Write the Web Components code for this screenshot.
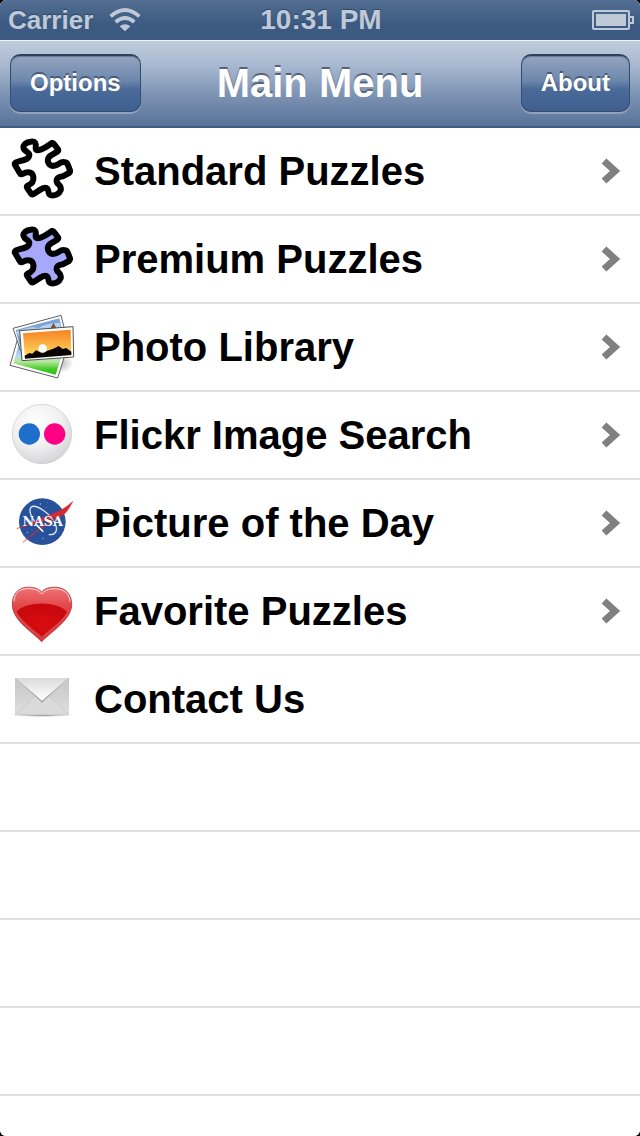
<!DOCTYPE html>
<html lang="en">
<head>
<meta charset="utf-8">
<meta name="viewport" content="width=device-width, initial-scale=1">
<title>Main Menu</title>
<style>
  html {
    background: #000;
  }
  body {
    margin: 0;
    font-family: "Liberation Sans", Arial, sans-serif;
    font-weight: bold;
  }
</style>
</head>
<body>
<puzzle-app>
  <status-bar slot="top" carrier="Carrier" time="10:31 PM"></status-bar>
  <nav-bar slot="top">
    <bar-button slot="left">Options</bar-button>
    Main Menu
    <bar-button slot="right">About</bar-button>
  </nav-bar>
  <menu-row icon="puzzle" href="#standard" arrow>Standard Puzzles</menu-row>
  <menu-row icon="premium" href="#premium" arrow>Premium Puzzles</menu-row>
  <menu-row icon="photos" href="#photos" arrow>Photo Library</menu-row>
  <menu-row icon="flickr" href="#flickr" arrow>Flickr Image Search</menu-row>
  <menu-row icon="nasa" href="#picture" arrow>Picture of the Day</menu-row>
  <menu-row icon="heart" href="#favorites" arrow>Favorite Puzzles</menu-row>
  <menu-row icon="mail" href="#contact">Contact Us</menu-row>
</puzzle-app>

<script>
const piece = (fill) => `
  <path fill="${fill}" stroke="#000" stroke-width="18" stroke-linejoin="round"
    d="M74 66 C64 54 76 43 92 41 C106 39 109 46 107 58 C106 68 112 68 124 64 C138 59 146 52 156 45
       Q160 44 162 48 L174 64 Q176 68 172 71 L153 82 C141 89 141 102 149 110 C158 117 168 113 177 107
       Q187 100 195 103 Q201 104 203 109 L210 127 Q211 132 207 135 L188 145 C174 147 169 151 170 161
       C172 171 186 171 182 187 C178 198 166 203 154 202 C143 201 147 188 142 182 C137 176 129 180 121 185
       L101 198 Q96 201 93 197 L81 179 Q79 175 83 173 C96 168 102 161 100 147 C98 134 88 130 76 134
       L67 138 Q62 140 60 136 L45 111 Q43 107 47 104 L60 99 C76 96 87 93 88 81 C88 73 80 73 74 66 Z"/>`;

// todos los iconos comparten el mismo viewBox de 270 x 258
const icons = {
  puzzle: piece("#fff"),
  premium: piece("#a5a8fb"),
  photos: `
    <defs>
      <linearGradient id="grass" x2="0" y2="1"><stop offset="0" stop-color="#5f90cf"/><stop offset=".45" stop-color="#b9d9f4"/><stop offset=".62" stop-color="#b5e89a"/><stop offset=".85" stop-color="#3fcb22"/><stop offset="1" stop-color="#2fb916"/></linearGradient>
      <linearGradient id="dusk" x2="0" y2="1"><stop offset="0" stop-color="#f58220"/><stop offset=".55" stop-color="#fbb648"/><stop offset="1" stop-color="#ffe65a"/></linearGradient>
      <radialGradient id="shade"><stop offset="0" stop-color="#000" stop-opacity=".3"/><stop offset="1" stop-color="#000" stop-opacity="0"/></radialGradient>
    </defs>
    <ellipse cx="178" cy="178" rx="42" ry="30" fill="url(#shade)"/>
    <path d="M54 101 L30 184 L173 222 L202 130 Z" fill="#fff" stroke="#606060" stroke-width="3"/>
    <path d="M60 108 L40 178 L167 212 L190 140 Z" fill="url(#grass)"/>
    <path d="M39 73 L183 34 L205 120 L62 140 Z" fill="#fff" stroke="#606060" stroke-width="3"/>
    <path d="M47 78 L178 43 L190 90 L60 128 Z" fill="#78a4d8"/>
    <path d="M47 84 Q90 65 115 72 Q145 55 180 57 L185 78 L60 100 Z" fill="#b8d0ee"/>
    <path d="M151 76 L155 67 L160 56 L166 67 L170 76 Z" fill="#80502e"/>
    <path d="M59 80 L219 68 L221 159 L66 170 Z" fill="#fff" stroke="#505050" stroke-width="3"/>
    <path d="M69 88 L212 77 L214 153 L75 163 Z" fill="url(#dusk)"/>
    <circle cx="128" cy="134" r="13" fill="#fff"/>
    <path d="M74 155 L88 147 L97 149 L108 139 L118 143 Q130 151 140 141 L151 137 L163 133 L176 126 L188 135 L199 132 L214 143 L214 153 L75 164 Z" fill="#090402"/>`,
  flickr: `
    <defs><radialGradient id="ball" cx=".4" cy=".3" r=".75"><stop offset="0" stop-color="#fff"/><stop offset=".55" stop-color="#f0f0f1"/><stop offset="1" stop-color="#d2d2d4"/></radialGradient></defs>
    <circle cx="126" cy="126" r="89" fill="url(#ball)" stroke="#c9c9ca" stroke-width="2"/>
    <circle cx="88" cy="126" r="32" fill="#1d6fcb"/>
    <circle cx="164" cy="126" r="32" fill="#ff0084"/>`,
  nasa: `
    <circle cx="127" cy="125" r="70" fill="#27519b"/>
    <g fill="#b4c8e8">
      <circle cx="121" cy="72" r="2"/><circle cx="139" cy="82" r="1"/><circle cx="107" cy="90" r="1"/><circle cx="151" cy="76" r="1"/>
      <circle cx="82" cy="157" r="2"/><circle cx="99" cy="164" r="1"/><circle cx="129" cy="175" r="2"/><circle cx="148" cy="180" r="1"/>
      <circle cx="174" cy="158" r="1"/><circle cx="112" cy="183" r="1"/><circle cx="89" cy="98" r="1"/><circle cx="143" cy="68" r="1"/>
    </g>
    <path d="M128 153 C104 133 82 94 93 82 C106 69 153 102 166 132 C174 151 168 165 146 164" fill="none" stroke="#dfe8f5" stroke-width="4"/>
    <path d="M50 146 Q118 119 166 98 Q191 89 219 64 Q205 92 193 102 Q124 141 68 188 Q113 143 178 108 Q112 129 50 146 Z" fill="#d72b31" stroke="#d72b31"/>
    <text x="128" y="138" text-anchor="middle" font-family="DejaVu Serif, serif" font-size="38" font-weight="bold" fill="#fff">NASA</text>
    <path d="M110 136 L130 155" stroke="#fff" stroke-width="4"/>`,
  heart: `
    <defs>
      <linearGradient id="red" x2="0" y2="1"><stop offset="0" stop-color="#ef7376"/><stop offset=".45" stop-color="#de3c3e"/><stop offset="1" stop-color="#d53539"/></linearGradient>
      <radialGradient id="deep" cx=".5" cy=".6"><stop offset="0" stop-color="#d90b10"/><stop offset="1" stop-color="#c9090e"/></radialGradient>
    </defs>
    <path d="M125 72 C137 58 154 57 172 58 C199 61 217 82 215 112 C213 155 158 188 125 221 C92 188 39 157 37 112 C35 82 53 60 79 58 C98 56 114 60 125 72 Z" fill="url(#red)" stroke="#a71d24" stroke-width="2"/>
    <path d="M50 132 C75 98 173 98 201 132 C183 163 148 184 125 205 C102 185 69 163 50 132 Z" fill="url(#deep)"/>
    <path d="M42 100 C43 73 61 63 80 62 C100 61 115 65 125 78 C136 64 153 61 173 63 C194 65 209 79 210 101" fill="none" stroke="#fff" stroke-opacity=".75" stroke-width="3"/>
    <path d="M44 126 C57 162 101 187 125 213 C151 186 196 160 208 125" fill="none" stroke="#f28c8e" stroke-opacity=".3" stroke-width="3"/>`,
  mail: `
    <defs>
      <linearGradient id="paper" x2="0" y2="1"><stop offset="0" stop-color="#c6c6c6"/><stop offset="1" stop-color="#dedede"/></linearGradient>
      <linearGradient id="flap" x2="0" y2="1"><stop offset="0" stop-color="#dcdcdc"/><stop offset="1" stop-color="#fff"/></linearGradient>
      <linearGradient id="fold" x2="0" y2="1"><stop offset="0" stop-color="#aaa"/><stop offset="1" stop-color="#777"/></linearGradient>
      <radialGradient id="floor"><stop offset="0" stop-color="#000" stop-opacity=".55"/><stop offset="1" stop-color="#000" stop-opacity="0"/></radialGradient>
    </defs>
    <ellipse cx="126" cy="176" rx="92" ry="7" fill="url(#floor)"/>
    <path d="M45 66 H207 V176 H45 Z" fill="url(#paper)"/>
    <path d="M45 176 L106 120 H146 L207 176 Z" fill="#dadada" stroke="#c6c6c6" stroke-width="2"/>
    <path d="M46 67 L126 140 L206 67 Z" fill="url(#fold)" opacity=".55"/>
    <path d="M47 66 L126 134 L205 66 Z" fill="url(#flap)"/>`
};

class PuzzleApp extends HTMLElement {
  constructor() {
    super();
    this.attachShadow({ mode: "open" }).innerHTML = `
      <style>
        :host {
          display: flex;
          flex-direction: column;
          min-height: 100vh;
          border-radius: 6px;
          overflow: hidden;
          background: #fff;
        }
        main {
          display: flex;
          flex-direction: column;
          flex: 1;
        }
        /* filas vacías hasta el final de la pantalla */
        .empty {
          flex: 1;
          background: repeating-linear-gradient(#fff 0 86px, #e0e0e0 86px 88px);
        }
      </style>
      <slot name="top"></slot>
      <main>
        <slot></slot>
        <div class="empty"></div>
      </main>`;
  }
}

class StatusBar extends HTMLElement {
  constructor() {
    super();
    this.attachShadow({ mode: "open" }).innerHTML = `
      <style>
        :host {
          display: grid;
          grid-template-columns: 1fr auto 1fr;
          align-items: center;
          height: 40px;
          padding: 0 6px 0 8px;
          box-sizing: border-box;
          background: linear-gradient(#536e92, #3d5b82 60%, #3c5a81);
          color: #bfc9d8;
          font-size: 28px;
          line-height: 40px;
          text-shadow: 0 -1px 1px #2e4768;
        }
        .left {
          display: flex;
          align-items: center;
          gap: 16px;
          font-size: 26px;
        }
        .battery {
          justify-self: end;
        }
        svg {
          display: block;
        }
      </style>
      <div class="left">
        <span class="carrier"></span>
        <svg width="32" height="24" viewBox="0 0 96 72" role="img" aria-label="Wi-Fi">
          <g fill="none" stroke="#bfc9d8" stroke-width="11">
            <path d="M5 25 Q48 -13 91 25"/>
            <path d="M20 42 Q48 18 76 42"/>
          </g>
          <path d="M32 55 Q48 42 64 55 L48 70 Z" fill="#bfc9d8"/>
        </svg>
      </div>
      <span class="time"></span>
      <svg class="battery" width="42" height="20" viewBox="0 0 42 20" role="img" aria-label="Battery">
        <rect x="1" y="1" width="36" height="18" rx="1" fill="none" stroke="#bfc9d8" stroke-width="2"/>
        <rect x="4" y="4" width="30" height="12" fill="#bfc9d8"/>
        <path d="M38 7 H41 V13 H38" fill="none" stroke="#bfc9d8" stroke-width="2"/>
      </svg>`;
  }

  connectedCallback() {
    this.shadowRoot.querySelector(".carrier").textContent = this.getAttribute("carrier") ?? "";
    this.shadowRoot.querySelector(".time").textContent = this.getAttribute("time") ?? "";
  }
}

class NavBar extends HTMLElement {
  constructor() {
    super();
    this.attachShadow({ mode: "open" }).innerHTML = `
      <style>
        :host {
          display: grid;
          grid-template-columns: 1fr auto 1fr;
          align-items: center;
          height: 88px;
          padding: 0 10px 2px;
          box-sizing: border-box;
          border-top: 1px solid #eef2f7;
          border-bottom: 2px solid #3c5b85;
          background: linear-gradient(#c0ccdd, #a9b9d1 28%, #7e94b4 62%, #587299);
        }
        h1 {
          margin: 0;
          color: #fff;
          font-size: 40px;
          line-height: 48px;
          text-shadow: 0 -2px 0 #556379;
        }
        .right {
          justify-self: end;
        }
      </style>
      <div><slot name="left"></slot></div>
      <h1><slot></slot></h1>
      <div class="right"><slot name="right"></slot></div>`;
  }
}

class BarButton extends HTMLElement {
  constructor() {
    super();
    this.attachShadow({ mode: "open" }).innerHTML = `
      <style>
        :host {
          display: block;
        }
        button {
          display: block;
          height: 58px;
          padding: 0 19px;
          border: 1px solid #344c6d;
          border-top: 2px solid #35415a;
          border-radius: 10px;
          background: linear-gradient(#94a5c0, #6d87ac 45%, #4a6a98 60%, #3e5f90);
          box-shadow: 0 2px 0 #8fa3bf, inset 0 1px 1px #6a7a94;
          color: #fff;
          font: inherit;
          font-size: 24px;
          line-height: 28px;
          text-shadow: 0 -2px 0 #465a79;
        }
      </style>
      <button type="button"><slot></slot></button>`;
  }
}

class MenuRow extends HTMLElement {
  constructor() {
    super();
    this.attachShadow({ mode: "open" }).innerHTML = `
      <style>
        :host {
          display: block;
          border-bottom: 2px solid #e0e0e0;
        }
        a {
          display: flex;
          align-items: center;
          gap: 4px;
          padding-right: 20px;
          color: #000;
          font-size: 40px;
          line-height: 48px;
          text-decoration: none;
        }
        .label {
          flex: 1;
        }
        svg {
          display: block;
          flex: none;
        }
        .arrow {
          display: none;
        }
        :host([arrow]) .arrow {
          display: block;
        }
      </style>
      <a>
        <svg class="icon" width="90" height="86" viewBox="0 0 270 258" aria-hidden="true"></svg>
        <span class="label"><slot></slot></span>
        <svg class="arrow" width="19" height="26" viewBox="0 0 19 26" aria-hidden="true">
          <path d="M3 3 L14 13 L3 23" fill="none" stroke="#808080" stroke-width="7"/>
        </svg>
      </a>`;
  }

  connectedCallback() {
    this.shadowRoot.querySelector("a").href = this.getAttribute("href") ?? "#";
    this.shadowRoot.querySelector(".icon").innerHTML = icons[this.getAttribute("icon")] ?? "";
  }
}

customElements.define("puzzle-app", PuzzleApp);
customElements.define("status-bar", StatusBar);
customElements.define("nav-bar", NavBar);
customElements.define("bar-button", BarButton);
customElements.define("menu-row", MenuRow);
</script>
</body>
</html>
